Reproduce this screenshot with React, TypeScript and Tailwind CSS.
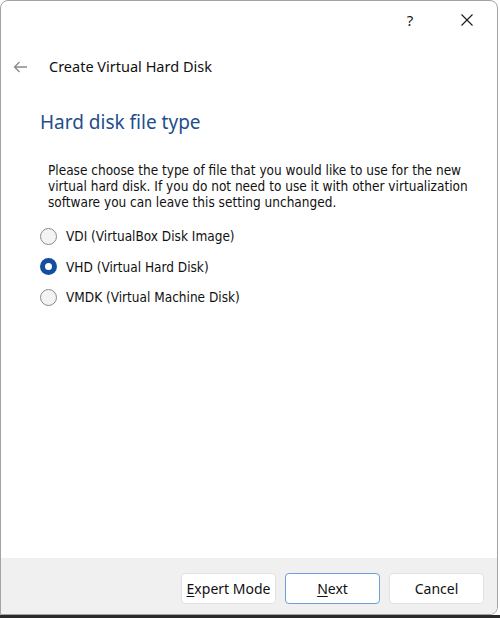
import React, { useState } from 'react';

const options = [
  { id: 'vdi', label: 'VDI (VirtualBox Disk Image)' },
  { id: 'vhd', label: 'VHD (Virtual Hard Disk)' },
  { id: 'vmdk', label: 'VMDK (Virtual Machine Disk)' },
];

function Radio({ checked }: { checked: boolean }) {
  if (checked) {
    return (
      <span className="w-[17px] h-[17px] rounded-full bg-[#12509f] flex items-center justify-center shrink-0">
        <span className="w-[7px] h-[7px] rounded-full bg-white" />
      </span>
    );
  }
  return <span className="w-[17px] h-[17px] rounded-full border border-[#8a8a8a] bg-[#f3f3f3] shrink-0" />;
}

export default function App() {
  const [type, setType] = useState('vhd');

  return (
    <div className="w-[500px] h-[618px] bg-white flex flex-col overflow-hidden">
      <div className="w-[498px] h-[615px] border border-[#a3a3a3] rounded-t-[8px] rounded-br-[8px] bg-white flex flex-col overflow-hidden">
        {/* Title bar */}
        <div className="h-[38px] flex items-center justify-end shrink-0">
          <span className="w-[58px] text-center text-[15px] text-[#1a1a1a] font-['Noto_Sans',sans-serif]">?</span>
          <span className="w-[58px] flex justify-center pr-[2px]">
            <svg width="12" height="12" viewBox="0 0 12 12" fill="none" stroke="#1a1a1a" strokeWidth="1.1">
              <path d="M0.5 0.5 L11.5 11.5 M11.5 0.5 L0.5 11.5" />
            </svg>
          </span>
        </div>

        {/* Header */}
        <div className="h-[55px] flex items-center pl-[12px] shrink-0">
          <svg width="15" height="12" viewBox="0 0 15 12" fill="none" stroke="#8a8a8a" strokeWidth="1.3">
            <path d="M14 6 H1.5 M6.5 1 L1.5 6 L6.5 11" />
          </svg>
          <span className="ml-[21px] text-[14.5px] text-[#111] font-['Noto_Sans',sans-serif]">Create Virtual Hard Disk</span>
        </div>

        {/* Content */}
        <div className="flex-1 pl-[39px] font-['DejaVu_Sans_Condensed','DejaVu_Sans',sans-serif]">
          <h2 className="mt-[14px] text-[19px] leading-[28px] text-[#1f4e8c] font-['Noto_Sans',sans-serif]">Hard disk file type</h2>

          <p className="mt-[26px] ml-[8px] text-[13.5px] leading-[16px] text-[#111]">
            Please choose the type of file that you would like to use for the new
            <br />
            virtual hard disk. If you do not need to use it with other virtualization
            <br />
            software you can leave this setting unchanged.
          </p>

          <div className="mt-[11px] flex flex-col">
            {options.map((o) => (
              <label
                key={o.id}
                className="h-[30.5px] flex items-center gap-[9px] text-[13.5px] text-[#111] cursor-default"
                onClick={() => setType(o.id)}
              >
                <Radio checked={type === o.id} />
                <span>{o.label}</span>
              </label>
            ))}
          </div>
        </div>

        {/* Footer */}
        <div className="h-[56px] bg-[#f0f0f0] flex items-center justify-end gap-[9px] pr-[13px] pt-[4px] shrink-0 font-['Noto_Sans',sans-serif] text-[14px] text-[#111]">
          <button className="w-[95px] h-[31px] bg-white rounded-[4px] border border-[#e2e2e2]">
            <span className="underline underline-offset-2">E</span>xpert Mode
          </button>
          <button className="w-[95px] h-[31px] bg-white rounded-[4px] border border-[#6f9fd4]">
            <span className="underline underline-offset-2">N</span>ext
          </button>
          <button className="w-[95px] h-[31px] bg-white rounded-[4px] border border-[#e2e2e2]">Cancel</button>
        </div>
      </div>
      <div className="flex-1 bg-[#2a2a2a]" />
    </div>
  );
}
